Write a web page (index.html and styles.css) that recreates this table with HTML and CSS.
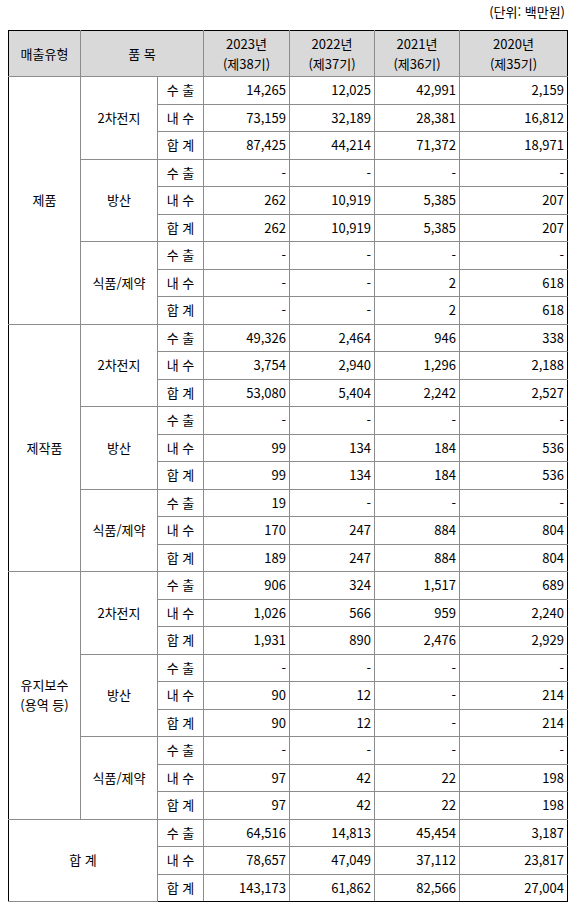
FILE: index.html
```html
<!DOCTYPE html>
<html lang="ko">
<head>
<meta charset="utf-8">
<link rel="stylesheet" href="styles.css">
</head>
<body>
<div class="unit">(단위: 백만원)</div>
<table class="sales">
<colgroup>
<col class="c1"><col class="c2"><col class="c3"><col class="c4"><col class="c5"><col class="c6"><col class="c7">
</colgroup>
<thead>
<tr><th>매출유형</th><th colspan="2">품 목</th><th>2023년<br>(제38기)</th><th>2022년<br>(제37기)</th><th>2021년<br>(제36기)</th><th>2020년<br>(제35기)</th></tr>
</thead>
<tbody>
<tr><td rowspan="9" class="cat">제품</td><td rowspan="3" class="item">2차전지</td><td class="kind">수 출</td><td>14,265</td><td>12,025</td><td>42,991</td><td>2,159</td></tr>
<tr><td class="kind">내 수</td><td>73,159</td><td>32,189</td><td>28,381</td><td>16,812</td></tr>
<tr><td class="kind">합 계</td><td>87,425</td><td>44,214</td><td>71,372</td><td>18,971</td></tr>
<tr><td rowspan="3" class="item">방산</td><td class="kind">수 출</td><td>-</td><td>-</td><td>-</td><td>-</td></tr>
<tr><td class="kind">내 수</td><td>262</td><td>10,919</td><td>5,385</td><td>207</td></tr>
<tr><td class="kind">합 계</td><td>262</td><td>10,919</td><td>5,385</td><td>207</td></tr>
<tr><td rowspan="3" class="item">식품/제약</td><td class="kind">수 출</td><td>-</td><td>-</td><td>-</td><td>-</td></tr>
<tr><td class="kind">내 수</td><td>-</td><td>-</td><td>2</td><td>618</td></tr>
<tr><td class="kind">합 계</td><td>-</td><td>-</td><td>2</td><td>618</td></tr>

<tr><td rowspan="9" class="cat">제작품</td><td rowspan="3" class="item">2차전지</td><td class="kind">수 출</td><td>49,326</td><td>2,464</td><td>946</td><td>338</td></tr>
<tr><td class="kind">내 수</td><td>3,754</td><td>2,940</td><td>1,296</td><td>2,188</td></tr>
<tr><td class="kind">합 계</td><td>53,080</td><td>5,404</td><td>2,242</td><td>2,527</td></tr>
<tr><td rowspan="3" class="item">방산</td><td class="kind">수 출</td><td>-</td><td>-</td><td>-</td><td>-</td></tr>
<tr><td class="kind">내 수</td><td>99</td><td>134</td><td>184</td><td>536</td></tr>
<tr><td class="kind">합 계</td><td>99</td><td>134</td><td>184</td><td>536</td></tr>
<tr><td rowspan="3" class="item">식품/제약</td><td class="kind">수 출</td><td>19</td><td>-</td><td>-</td><td>-</td></tr>
<tr><td class="kind">내 수</td><td>170</td><td>247</td><td>884</td><td>804</td></tr>
<tr><td class="kind">합 계</td><td>189</td><td>247</td><td>884</td><td>804</td></tr>

<tr><td rowspan="9" class="cat">유지보수<br>(용역 등)</td><td rowspan="3" class="item">2차전지</td><td class="kind">수 출</td><td>906</td><td>324</td><td>1,517</td><td>689</td></tr>
<tr><td class="kind">내 수</td><td>1,026</td><td>566</td><td>959</td><td>2,240</td></tr>
<tr><td class="kind">합 계</td><td>1,931</td><td>890</td><td>2,476</td><td>2,929</td></tr>
<tr><td rowspan="3" class="item">방산</td><td class="kind">수 출</td><td>-</td><td>-</td><td>-</td><td>-</td></tr>
<tr><td class="kind">내 수</td><td>90</td><td>12</td><td>-</td><td>214</td></tr>
<tr><td class="kind">합 계</td><td>90</td><td>12</td><td>-</td><td>214</td></tr>
<tr><td rowspan="3" class="item">식품/제약</td><td class="kind">수 출</td><td>-</td><td>-</td><td>-</td><td>-</td></tr>
<tr><td class="kind">내 수</td><td>97</td><td>42</td><td>22</td><td>198</td></tr>
<tr><td class="kind">합 계</td><td>97</td><td>42</td><td>22</td><td>198</td></tr>

<tr><td rowspan="3" colspan="2" class="cat">합 계</td><td class="kind">수 출</td><td>64,516</td><td>14,813</td><td>45,454</td><td>3,187</td></tr>
<tr><td class="kind">내 수</td><td>78,657</td><td>47,049</td><td>37,112</td><td>23,817</td></tr>
<tr><td class="kind">합 계</td><td>143,173</td><td>61,862</td><td>82,566</td><td>27,004</td></tr>
</tbody>
</table>
</body>
</html>
```

FILE: styles.css
```css
body {
  margin: 0;
  padding: 0 7px 0 8px;
  font-family: "Noto Sans CJK KR", "Liberation Sans", sans-serif;
  font-size: 13px;
  color: #000;
  background: #fff;
}
.unit {
  text-align: right;
  height: 30px;
  line-height: 24px;
  padding-right: 1px;
}
.sales {
  border-collapse: collapse;
  table-layout: fixed;
  width: 559px;
  border: 1px solid #000;
}
.c1 { width: 72px; }
.c2 { width: 77px; }
.c3 { width: 46px; }
.c4 { width: 86px; }
.c5 { width: 85px; }
.c6 { width: 85px; }
.c7 { width: 108px; }
.sales th {
  background: #d9d9d9;
  font-weight: normal;
  height: 45px;
  line-height: 20px;
  border: 1px solid #8c8c8c;
  border-top-color: #000;
  padding: 0;
  text-align: center;
}
.sales td {
  border: 1px solid #8c8c8c;
  height: 26.5px;
  padding: 0 3px 0 0;
  text-align: right;
  line-height: 16px;
}
.sales td.cat, .sales td.item, .sales td.kind {
  text-align: center;
  padding: 0;
  line-height: 20px;
}
.sales tr > :first-child { border-left-color: #000; }
.sales tr > :last-child { border-right-color: #000; }
.sales tbody tr:last-child td { border-bottom-color: #000; }
```
